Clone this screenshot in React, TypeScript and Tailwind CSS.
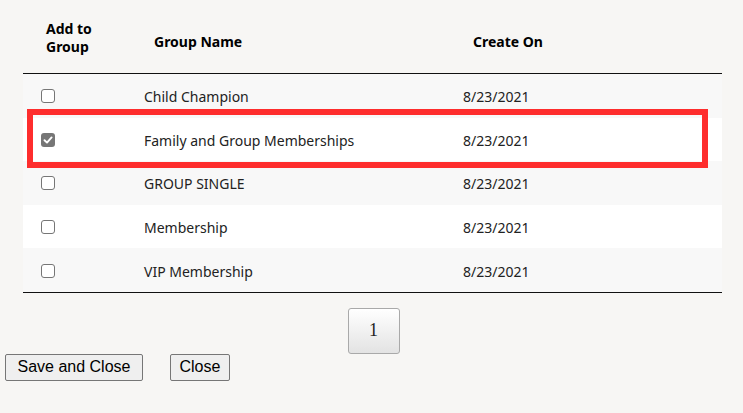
import React from "react";

const rows = [
  { name: "Child Champion", date: "8/23/2021", checked: false },
  { name: "Family and Group Memberships", date: "8/23/2021", checked: true },
  { name: "GROUP SINGLE", date: "8/23/2021", checked: false },
  { name: "Membership", date: "8/23/2021", checked: false },
  { name: "VIP Membership", date: "8/23/2021", checked: false },
];

function Box({ checked }: { checked: boolean }) {
  if (checked) {
    return (
      <div className="w-[14px] h-[14px] rounded-[3px] bg-[#767676] flex items-center justify-center">
        <svg width="10" height="10" viewBox="0 0 10 10">
          <path d="M1.5 5.2 L4 7.6 L8.6 2.4" stroke="#fff" strokeWidth="1.9" fill="none" strokeLinecap="round" strokeLinejoin="round" />
        </svg>
      </div>
    );
  }
  return <div className="w-[14px] h-[14px] rounded-[3px] border border-[#767676] bg-white" />;
}

export default function App() {
  return (
    <div className="w-[743px] h-[413px] bg-[#f7f6f4] overflow-hidden" style={{ fontFamily: '"Noto Sans", "Open Sans", sans-serif' }}>
      <div className="pl-[23px] w-[722px]">
        <div className="relative">
          <div className="grid grid-cols-[121px_319px_1fr] h-[74px] items-center text-[14px] font-bold text-black leading-[18px] border-b border-[#111]">
            <div className="pl-[23px] pt-[3px]">Add to<br />Group</div>
            <div className="pl-[10px] pt-[11px]">Group Name</div>
            <div className="pl-[10px] pt-[11px]">Create On</div>
          </div>
          {rows.map((r, i) => (
            <div
              key={r.name}
              className={`grid grid-cols-[121px_319px_1fr] h-[43.6px] items-center text-[14px] text-[#222] ${i % 2 === 0 ? "bg-[#f8f8f8]" : "bg-white"}`}
            >
              <div className="pl-[18px] flex items-center pt-[1px]"><Box checked={r.checked} /></div>
              <div className="pt-[2px]">{r.name}</div>
              <div className="pt-[2px]">{r.date}</div>
            </div>
          ))}
          <div className="border-t border-[#111]" />
          <div className="absolute left-[4px] top-[109px] w-[681px] h-[59px] border-[6px] border-[#fe2d2d] pointer-events-none" />
        </div>
        <div className="flex justify-center pt-[15px] pl-[2px]">
          <button className="w-[52px] h-[46px] rounded-[3px] border border-[#a9a9a9] bg-gradient-to-b from-white to-[#e3e3e3] text-[18px] text-[#222]" style={{ fontFamily: '"Liberation Serif", serif' }}>
            1
          </button>
        </div>
      </div>
      <div className="flex gap-[27px] pl-[5px]" style={{ fontFamily: '"Liberation Sans", Arial, sans-serif' }}>
        <button className="h-[27px] px-[11.5px] bg-[#efefef] border border-[#767676] rounded-[2px] text-[16px] text-black leading-none">Save and Close</button>
        <button className="h-[27px] px-[8.5px] bg-[#efefef] border border-[#767676] rounded-[2px] text-[16px] text-black leading-none">Close</button>
      </div>
    </div>
  );
}
